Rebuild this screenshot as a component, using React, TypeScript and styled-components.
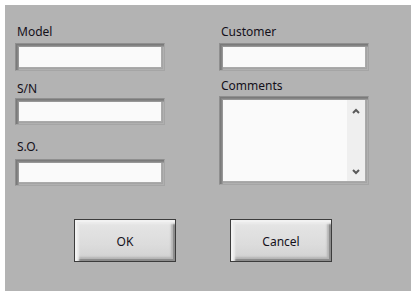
import React from 'react';
import styled, { createGlobalStyle } from 'styled-components';

const GlobalStyle = createGlobalStyle`
  html, body {
    margin: 0;
    padding: 0;
    background: #ffffff;
  }
  body {
    width: 417px;
    height: 296px;
    overflow: hidden;
  }
`;

const Page = styled.div`
  padding: 5px 6px 5px 5px;
  width: 417px;
  height: 296px;
  box-sizing: border-box;
`;

const Panel = styled.div`
  height: 100%;
  background: #b3b3b3;
  box-sizing: border-box;
  padding: 19px 0 0 10px;
  font-family: 'Noto Sans', 'Open Sans', sans-serif;
  font-size: 12px;
  color: #14101a;
`;

const Columns = styled.div`
  display: grid;
  grid-template-columns: 150px 150px;
  column-gap: 54px;
`;

const Column = styled.div`
  display: flex;
  flex-direction: column;
`;

const Field = styled.div<{ $top?: number }>`
  display: flex;
  flex-direction: column;
  margin-top: ${p => p.$top ?? 0}px;
`;

const Label = styled.label<{ $gap?: number }>`
  line-height: 16px;
  height: 16px;
  margin-bottom: ${p => p.$gap ?? 3}px;
  padding-left: 2px;
`;

const Sunken = styled.div<{ $height: number }>`
  position: relative;
  height: ${p => p.$height}px;
  box-sizing: border-box;
  background: #fafafa;
  border: 1px solid #a5a5a5;
  border-top-color: #8f8f8f;
  border-left-color: #8f8f8f;
  box-shadow:
    inset 1px 1px 0 #7a7a7a,
    inset 2px 2px 0 #858585,
    inset 3px 3px 0 #979797,
    inset -1px -1px 0 #b0b0b0,
    inset -2px -2px 0 #a4a4a4,
    inset -3px -3px 0 #aaaaaa;
`;

const TextBox = styled.div`
  position: absolute;
  inset: 3px;
  background: #fafafa;
`;

const ScrollArea = styled.div`
  position: absolute;
  inset: 3px;
  display: flex;
  background: #fafafa;
`;

const Text = styled.div`
  flex: 1;
`;

const Scrollbar = styled.div`
  width: 18px;
  background: #efefef;
  display: flex;
  flex-direction: column;
  justify-content: space-between;
  align-items: center;
  padding: 8px 0 6px;
`;

const ButtonRow = styled.div`
  display: flex;
  gap: 54px;
  margin-top: 33px;
  padding-left: 59px;
`;

const Button = styled.button`
  width: 102px;
  height: 43px;
  box-sizing: border-box;
  border: 1px solid #3c3c3c;
  background: linear-gradient(180deg, #e6e6e6 0%, #dcdcdc 60%, #d0d0d0 100%);
  box-shadow:
    inset 2px 2px 0 #f2f2f2,
    inset 4px 4px 2px #ececec,
    inset -2px -2px 0 #8c8c8c,
    inset -4px -4px 2px #b4b4b4;
  font-family: 'Noto Sans', 'Open Sans', sans-serif;
  font-size: 12px;
  color: #14101a;
  padding: 0;
  padding-top: 1px;
  cursor: pointer;
`;

const Chevron = ({ up }: { up?: boolean }) => (
  <svg width="8" height="6" viewBox="0 0 8 6">
    <polyline
      points={up ? '1,5 4,2 7,5' : '1,1 4,4 7,1'}
      fill="none"
      stroke="#5a5a5a"
      strokeWidth="2"
    />
  </svg>
);

export default function App() {
  return (
    <>
      <GlobalStyle />
      <Page>
        <Panel>
          <Columns>
            <Column>
              <Field>
                <Label>Model</Label>
                <Sunken $height={28}><TextBox /></Sunken>
              </Field>
              <Field $top={10}>
                <Label $gap={1}>S/N</Label>
                <Sunken $height={27}><TextBox /></Sunken>
              </Field>
              <Field $top={14}>
                <Label $gap={4}>S.O.</Label>
                <Sunken $height={27}><TextBox /></Sunken>
              </Field>
            </Column>
            <Column>
              <Field>
                <Label>Customer</Label>
                <Sunken $height={28}><TextBox /></Sunken>
              </Field>
              <Field $top={7}>
                <Label $gap={2}>Comments</Label>
                <Sunken $height={89}>
                  <ScrollArea>
                    <Text />
                    <Scrollbar>
                      <Chevron up />
                      <Chevron />
                    </Scrollbar>
                  </ScrollArea>
                </Sunken>
              </Field>
            </Column>
          </Columns>
          <ButtonRow>
            <Button>OK</Button>
            <Button>Cancel</Button>
          </ButtonRow>
        </Panel>
      </Page>
    </>
  );
}
